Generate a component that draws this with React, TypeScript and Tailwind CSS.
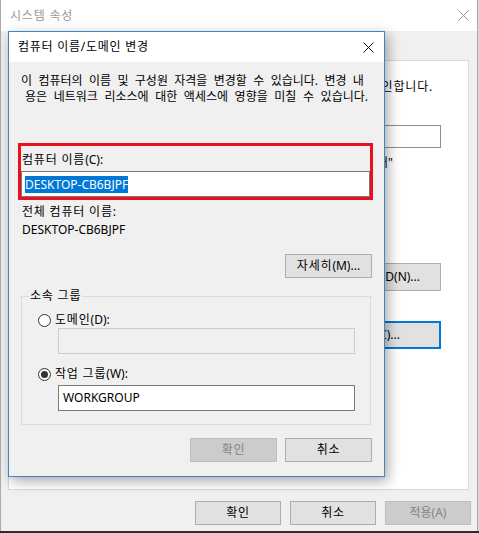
import React from 'react';

const font = "font-['Noto_Sans','Noto_Sans_CJK_KR',sans-serif]";

function CloseIcon({ color }: { color: string }) {
  return (
    <svg width="11" height="11" viewBox="0 0 11 11" className="shrink-0">
      <path d="M0.5 0.5 L10.5 10.5 M10.5 0.5 L0.5 10.5" stroke={color} strokeWidth="1" fill="none" />
    </svg>
  );
}

// spreads the words of one line over a fixed width, like the wrapped static text
function JustifiedLine({ text, className }: { text: string; className: string }) {
  return (
    <div className={`flex justify-between whitespace-nowrap ${className}`}>
      {text.split(' ').map((word, i) => (
        <span key={i}>{word}</span>
      ))}
    </div>
  );
}

interface WinButtonProps {
  label: React.ReactNode;
  disabled?: boolean;
  width?: string;
}

function WinButton({ label, disabled = false, width = 'w-[86px]' }: WinButtonProps) {
  return (
    <button
      type="button"
      className={`flex h-[24px] ${width} items-center justify-center whitespace-nowrap border text-[12px] leading-[16px] ${
        disabled ? 'border-[#bfbfbf] bg-[#cccccc] text-[#838383]' : 'border-[#adadad] bg-[#e1e1e1] text-black'
      }`}
    >
      {label}
    </button>
  );
}

function Radio({ checked = false }: { checked?: boolean }) {
  return (
    <span className="flex h-[13px] w-[13px] shrink-0 items-center justify-center rounded-full border border-[#333333] bg-white">
      {checked && <span className="h-[7px] w-[7px] rounded-full bg-[#333333]" />}
    </span>
  );
}

export default function App() {
  return (
    <div className={`relative flex h-[533px] w-[479px] flex-col overflow-hidden bg-[#dcdcdc] text-[12px] leading-[16px] text-black ${font}`}>
      {/* System properties window (behind) */}
      <div className="flex h-[531px] w-[478px] shrink-0 flex-col border-x border-[#aaaaaa] bg-[#f0f0f0]">
        <div className="flex h-[31px] shrink-0 items-center justify-between bg-white pl-[9px] pr-[8px]">
          <span className="tracking-[0.8px] text-[#999999]">시스템 속성</span>
          <CloseIcon color="#999999" />
        </div>

        <div className="flex flex-1 flex-col pl-[7px] pr-[6px] pt-[29px]">
          <div className="h-[430px] w-[461px] overflow-hidden border border-[#d9d9d9] bg-white">
            <div className="flex flex-col pt-[18px]">
              <div className="flex w-[424px] justify-end whitespace-nowrap tracking-[0.8px]">
                다음 정보를 사용하여 네트워크에서 이 컴퓨터를 확인합니다.
              </div>
              <div className="ml-[191px] mt-[30px] h-[23px] w-[241px] border border-[#8f8f8f] bg-white" />
              <div className="mt-[7px] flex w-[384px] justify-end whitespace-nowrap">
                예: "주방 컴퓨터" 또는 "Mary의 컴퓨터"
              </div>
              <button
                type="button"
                className="ml-[321px] mt-[92px] flex h-[28px] w-[111px] items-center justify-end whitespace-nowrap border border-[#adadad] bg-[#e1e1e1] pr-[20px]"
              >
                네트워크 ID(N)...
              </button>
              <button
                type="button"
                className="ml-[321px] mt-[30px] flex h-[28px] w-[111px] items-center justify-end whitespace-nowrap border-2 border-[#0078d7] bg-[#e1e1e1] pr-[39px]"
              >
                변경(C)...
              </button>
            </div>
          </div>

          <div className="mt-[11px] flex justify-end gap-[9px]">
            <WinButton label={<span className="tracking-[0.8px]">확인</span>} />
            <WinButton label={<span className="tracking-[0.8px]">취소</span>} />
            <WinButton label="적용(A)" disabled />
          </div>
        </div>
      </div>
      <div className="h-[2px] w-full bg-[#2d2d2d]" />

      {/* Computer name / domain changes dialog */}
      <div className="absolute left-[8px] top-[31px] flex h-[446px] w-[377px] flex-col border border-[#3f84c4] bg-[#f0f0f0] shadow-[3px_4px_12px_rgba(0,0,0,0.35)]">
        <div className="flex h-[30px] shrink-0 items-center justify-between bg-white pl-[9px] pr-[10px]">
          <span className="tracking-[0.75px]">컴퓨터 이름/도메인 변경</span>
          <CloseIcon color="#111111" />
        </div>

        <div className="flex flex-col pt-[11px]">
          <JustifiedLine className="ml-[12px] w-[343px]" text="이 컴퓨터의 이름 및 구성원 자격을 변경할 수 있습니다. 변경 내" />
          <JustifiedLine className="ml-[16px] w-[343px]" text="용은 네트워크 리소스에 대한 액세스에 영향을 미칠 수 있습니다." />

          <div className="ml-[9px] mt-[38px] w-[355px] border-[3px] border-[#e8111d]">
            <div className="pl-[1px] pt-[6px]">
              <span className="tracking-[0.8px]">컴퓨터 이름</span>(C):
            </div>
            <div className="mt-[3px] flex h-[26px] items-center border border-[#7a7a7a] bg-white pl-[3px]">
              <span className="bg-[#0078d7] leading-[17px] text-white">DESKTOP-CB6BJPF</span>
            </div>
          </div>

          <div className="ml-[13px] mt-[3px] leading-[18px] tracking-[0.8px]">전체 컴퓨터 이름:</div>
          <div className="ml-[13px] leading-[18px]">DESKTOP-CB6BJPF</div>

          <div className="mr-[12px] mt-[15px] flex justify-end">
            <WinButton
              label={
                <>
                  <span className="tracking-[0.8px]">자세히</span>(M)...
                </>
              }
              width="w-[87px]"
            />
          </div>

          <fieldset className="ml-[12px] mt-[10px] w-[350px] border border-[#dcdcdc] pb-[13px]">
            <legend className="ml-[7px] px-[1px] leading-[16px] tracking-[0.8px]">소속 그룹</legend>
            <label className="ml-[16px] mt-[8px] flex items-center gap-[4px]">
              <Radio />
              <span>
                <span className="tracking-[0.8px]">도메인</span>(D):
              </span>
            </label>
            <div className="ml-[36px] h-[26px] w-[297px] border border-[#cccccc] bg-[#f0f0f0]" />
            <label className="ml-[16px] mt-[12px] flex items-center gap-[4px]">
              <Radio checked />
              <span>
                <span className="tracking-[0.8px]">작업 그룹</span>(W):
              </span>
            </label>
            <div className="ml-[36px] mt-[3px] flex h-[26px] w-[297px] items-center border border-[#7a7a7a] bg-white pl-[4px]">
              WORKGROUP
            </div>
          </fieldset>

          <div className="mt-[13px] flex justify-end gap-[8px] pr-[12px]">
            <WinButton label={<span className="tracking-[0.8px]">확인</span>} disabled width="w-[87px]" />
            <WinButton label={<span className="tracking-[0.8px]">취소</span>} width="w-[87px]" />
          </div>
        </div>
      </div>
    </div>
  );
}
